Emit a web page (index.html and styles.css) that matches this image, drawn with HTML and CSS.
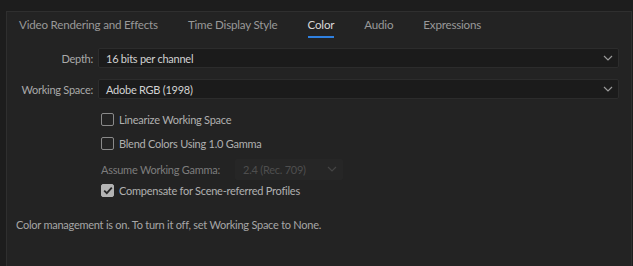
FILE: index.html
```html
<!DOCTYPE html>
<html lang="en">
<head>
  <meta charset="UTF-8">
  <title>Project Settings - Color</title>
  <link rel="stylesheet" href="styles.css">
</head>
<body>
  <div class="panel">
    <div class="tabs">
      <div class="tab">Video Rendering and Effects</div>
      <div class="tab">Time Display Style</div>
      <div class="tab active">Color</div>
      <div class="tab">Audio</div>
      <div class="tab">Expressions</div>
    </div>

    <div class="module">
      <div class="row">
        <label class="field-label">Depth:</label>
        <div class="dropdown">
          <span>16 bits per channel</span>
          <svg class="chevron" width="10" height="6" viewBox="0 0 10 6"><path d="M1 1l4 4 4-4" fill="none" stroke="#9a9a9a" stroke-width="1.2"/></svg>
        </div>
      </div>
      <div class="row">
        <label class="field-label">Working Space:</label>
        <div class="dropdown">
          <span>Adobe RGB (1998)</span>
          <svg class="chevron" width="10" height="6" viewBox="0 0 10 6"><path d="M1 1l4 4 4-4" fill="none" stroke="#9a9a9a" stroke-width="1.2"/></svg>
        </div>
      </div>

      <div class="options">
        <label class="check"><span class="box"></span> Linearize Working Space</label>
        <label class="check"><span class="box"></span> Blend Colors Using 1.0 Gamma</label>
        <div class="gamma">
          <span class="dim-label">Assume Working Gamma:</span>
          <div class="dropdown disabled">
            <span>2.4 (Rec. 709)</span>
            <svg class="chevron" width="10" height="6" viewBox="0 0 10 6"><path d="M1 1l4 4 4-4" fill="none" stroke="#444" stroke-width="1.2"/></svg>
          </div>
        </div>
        <label class="check"><span class="box checked"><svg width="10" height="9" viewBox="0 0 10 9"><path d="M1.2 4.6l2.6 2.6 5-5.6" fill="none" stroke="#262626" stroke-width="1.8"/></svg></span> Compensate for Scene-referred Profiles</label>
      </div>

      <p class="note">Color management is on. To turn it off, set Working Space to None.</p>
    </div>
  </div>
</body>
</html>
```

FILE: styles.css
```css
body {
  margin: 0;
  background-color: #1d1d1d;
  font-family: 'Lato', sans-serif;
  font-size: 11px;
  letter-spacing: -0.25px;
  color: #a9a9a9;
  height: 266px;
  overflow: hidden;
}

.panel {
  margin: 11px 1px 0 6px;
  background: #232323;
  border-top: 1px solid #2f2f2f;
  border-left: 1px solid #2f2f2f;
  border-right: 1px solid #2f2f2f;
  height: 260px;
}

.tabs {
  display: flex;
  padding-left: 12px;
  gap: 30px;
  height: 26px;
}

.tab {
  padding-top: 6px;
  color: #999;
  font-size: 11.6px;
  letter-spacing: -0.2px;
  height: 18px;
}

.tab.active {
  color: #d8d8d8;
  border-bottom: 2px solid #2f80e0;
}

.module {
  padding: 10px 12px 0 0;
}

.row {
  display: flex;
  align-items: center;
  margin-bottom: 11px;
}

.field-label {
  width: 86px;
  text-align: right;
  padding-right: 5px;
}

.dropdown {
  flex: 1;
  height: 18px;
  display: flex;
  align-items: center;
  justify-content: space-between;
  background: #1b1b1b;
  border: 1px solid #2c2c2c;
  border-radius: 2px;
  padding: 0 5px 0 7px;
  color: #d2d2d2;
}

.options {
  padding-left: 94px;
  display: flex;
  flex-direction: column;
  gap: 10px;
  margin-top: 13px;
}

.check {
  display: flex;
  align-items: center;
  gap: 5px;
  color: #b0b0b0;
  height: 14px;
}

.box {
  width: 11px;
  height: 11px;
  border: 1px solid #8a8a8a;
  border-radius: 2px;
  display: flex;
  align-items: center;
  justify-content: center;
}

.box.checked {
  background: #b3b3b3;
  border-color: #b3b3b3;
}

.gamma {
  display: flex;
  align-items: center;
  gap: 15px;
  height: 20px;
  margin: -1px 0 -6px;
}

.dim-label {
  color: #7d7d7d;
}

.dropdown.disabled {
  flex: none;
  width: 94px;
  height: 19px;
  background: #262626;
  border-color: #262626;
  color: #4e4e4e;
}

.note {
  margin: 21px 0 0 9px;
  color: #a6a6a6;
  font-size: 11px;
}
```
